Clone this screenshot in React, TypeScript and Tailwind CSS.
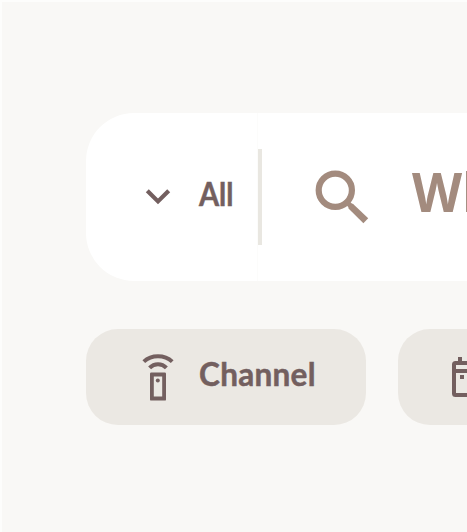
const ink = '#735f5f';

function Chevron() {
  return (
    <svg className="block h-6 w-7 shrink-0" viewBox="0 0 28 24" fill="none" stroke={ink} strokeWidth="4.2">
      <path d="M3.3 5.8 14 16.4 24.7 5.8" />
    </svg>
  );
}

function Search() {
  return (
    <svg className="block h-14 w-14 shrink-0" viewBox="0 0 56 56" fill="none" stroke="#a38b7e">
      <circle cx="21.3" cy="21.3" r="16.6" strokeWidth="6.2" />
      <path d="M34.5 34.7h4.4L54.2 49.3 49.4 54.2 34.5 39.4z" fill="#a38b7e" stroke="none" />
      <path d="M34.5 34.7l3 3" strokeWidth="5" />
    </svg>
  );
}

function Remote() {
  return (
    <svg className="block h-12 w-8 shrink-0" viewBox="0 0 32 48" fill="none" stroke={ink} strokeWidth="4">
      <path d="M1.8 8.6C9.5 1.4 22.5 1.4 30.2 8.6M7.6 14.9C12.2 10 19.8 10 24.4 14.9" />
      <path d="M8 20.8q0-1.2 1.2-1.2h13.6q1.2 0 1.2 1.2v25.6q0 1.2-1.2 1.2H9.2q-1.2 0-1.2-1.2zM11.8 23.6v20h8.4v-20z" fill={ink} stroke="none" fillRule="evenodd" />
      <circle cx="15.8" cy="27.6" r="2" fill={ink} stroke="none" />
    </svg>
  );
}

function CalendarIcon() {
  return (
    <svg className="block h-10 w-9 shrink-0" viewBox="0 0 36 40" fill="none" stroke={ink} strokeWidth="4">
      <rect x="2" y="6" width="32" height="32" rx="1.5" />
      <path d="M2 14h32M8 0v6M28 0v6" />
      <path d="M8 18h4v4H8z" fill={ink} stroke="none" />
    </svg>
  );
}

export default function App() {
  return (
    <main className="h-[532px] w-[467px] overflow-hidden border-t-2 border-l-2 border-[#fdfdfc] bg-[#f9f8f6] pt-[111px] pl-[84px] font-['Lato',sans-serif] font-bold text-[#735f5f]">
      <div className="flex h-[168px] w-[600px] rounded-[48px] bg-white">
        <div className="flex w-[172px] items-center border-r border-[#fcfcfb] pl-[58px]">
          <Chevron />
          <span className="mb-[6px] ml-[27px] origin-left scale-x-[0.92] text-[31.5px] leading-10 whitespace-nowrap [-webkit-text-stroke:0.5px]">All</span>
        </div>
        <div className="flex items-center">
          <div className="h-24 w-1 bg-[#e9e7e1]" />
          <div className="ml-[52px]"><Search /></div>
          <span className="mb-[12px] ml-[42px] origin-left scale-x-[0.96] font-['Open_Sans',sans-serif] text-[54px] leading-[60px] whitespace-nowrap text-[#a38b7e]">Wh</span>
        </div>
      </div>
      <div className="mt-12 flex w-[600px] gap-8">
        <div className="flex h-24 w-[280px] shrink-0 items-center rounded-[32px] bg-[#ebe8e3] pl-14">
          <Remote />
          <span className="mb-[6px] ml-[25px] text-[31.5px] leading-10 tracking-[0.3px] whitespace-nowrap [-webkit-text-stroke:0.5px]">Channel</span>
        </div>
        <div className="flex h-24 w-[280px] shrink-0 items-center rounded-[32px] bg-[#ebe8e3] pl-[54px]">
          <CalendarIcon />
        </div>
      </div>
    </main>
  );
}
